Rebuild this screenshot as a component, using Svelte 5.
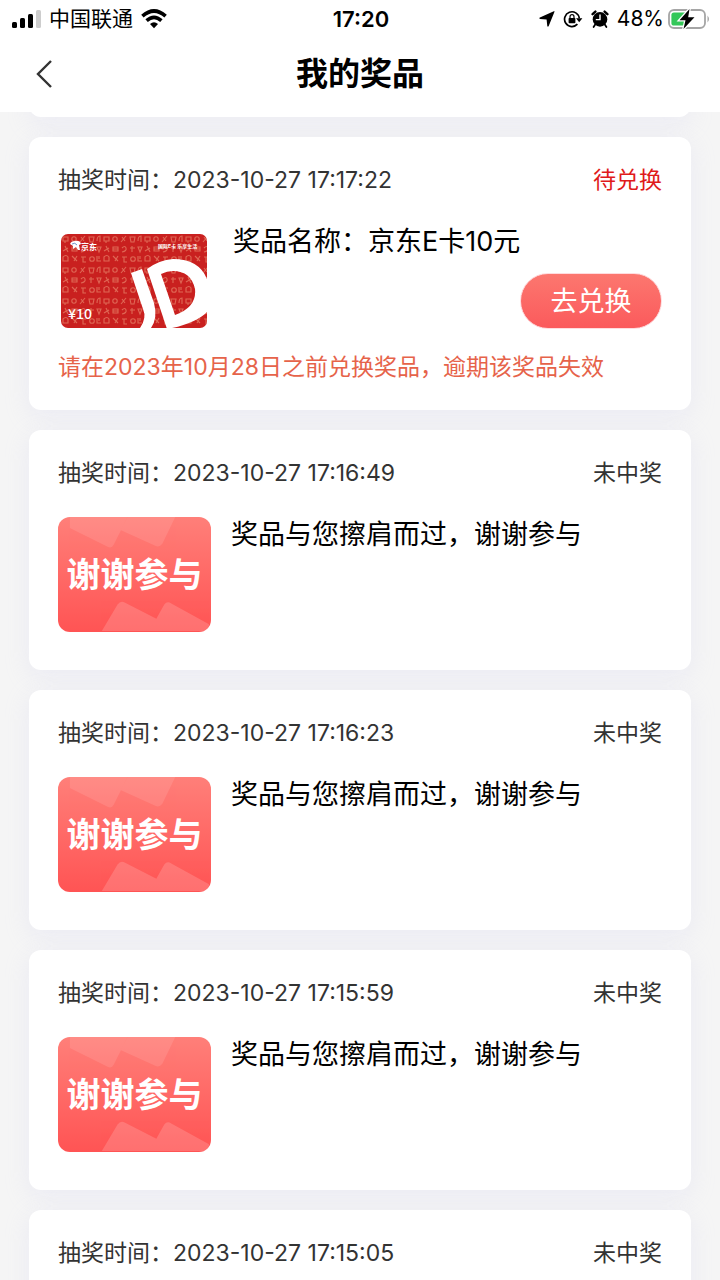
<script>
  const records = [
    { time: '2023-10-27 17:17:22', status: '待兑换', won: true, name: '奖品名称：京东E卡10元' },
    { time: '2023-10-27 17:16:49', status: '未中奖', won: false, name: '奖品与您擦肩而过，谢谢参与' },
    { time: '2023-10-27 17:16:23', status: '未中奖', won: false, name: '奖品与您擦肩而过，谢谢参与' },
    { time: '2023-10-27 17:15:59', status: '未中奖', won: false, name: '奖品与您擦肩而过，谢谢参与' },
    { time: '2023-10-27 17:15:05', status: '未中奖', won: false, name: '' }
  ];
</script>

<div class="page">
  <header>
    <div class="status">
      <div class="side">
        <svg width="32" height="20" viewBox="0 0 32 20" aria-hidden="true">
          <rect x="1" y="13" width="5" height="6" rx="1.5" />
          <rect x="9" y="9" width="5" height="10" rx="1.5" />
          <rect x="17" y="5" width="5" height="14" rx="1.5" />
          <rect x="25" y="1" width="5" height="18" rx="1.5" fill="#cdcdcd" />
        </svg>
        <span class="carrier">中国联通</span>
        <svg class="wifi" width="26" height="20" viewBox="0 0 26 20" aria-hidden="true">
          <g fill="none" stroke="#000" stroke-width="3.6">
            <path d="M1.4 7.2 Q13 -3.2 24.6 7.2" />
            <path d="M5.6 11.7 Q13 5.1 20.4 11.7" />
          </g>
          <path d="M9 15.1 Q13 11.5 17 15.1 L13 19.2 Z" />
        </svg>
      </div>
      <span class="clock">17:20</span>
      <div class="side right">
        <svg width="16" height="16" viewBox="0 0 16 16" aria-hidden="true">
          <path d="M15.6 .5 9.6 15.2 Q8.8 16.2 8.3 15 L7.6 8.4 1 7.9 Q-.3 7.4 .9 6.6 L14.8 .3 Q15.7 -.1 15.6 .5 Z" />
        </svg>
        <svg width="20" height="18" viewBox="0 0 20 18" aria-hidden="true">
          <path d="M14.4 14.2 A7.4 7.4 0 1 1 16.3 8.3" fill="none" stroke="#000" stroke-width="1.7" />
          <path d="M13 8.2 H19.4 L16.2 12.2 Z" />
          <rect x="5.6" y="8" width="6.8" height="5.2" rx=".8" />
          <path d="M7 8.4 V6.7 a2 2 0 0 1 4 0 V8.4" fill="none" stroke="#000" stroke-width="1.2" />
        </svg>
        <svg width="18" height="18" viewBox="0 0 18 18" aria-hidden="true">
          <circle cx="9" cy="9.4" r="7.3" />
          <path d="M1.6 4.2 4.4 1.6 M16.4 4.2 13.6 1.6" stroke="#000" stroke-width="2.4" stroke-linecap="round" />
          <path d="M4.2 14.6 2.6 17 M13.8 14.6 15.4 17" stroke="#000" stroke-width="1.8" stroke-linecap="round" />
          <path d="M9 4.6 V9.6 H4.8" fill="none" stroke="#fff" stroke-width="1.4" />
        </svg>
        <span class="percent">48%</span>
        <svg class="battery" width="43" height="20" viewBox="0 0 43 20" aria-hidden="true">
          <rect x="1" y="1" width="36" height="18" rx="5" fill="#fff" stroke="#a5a5a5" stroke-width="1.8" />
          <path d="M39.5 6.5 Q42.5 10 39.5 13.5 Z" fill="#a5a5a5" />
          <path d="M6 3.4 H19 V16.6 H6 Q3.4 16.6 3.4 14 V6 Q3.4 3.4 6 3.4 Z" fill="#34c759" />
          <path d="M21.5 0 11.5 11.2 H17.5 L15.5 20 26.5 8.3 H20.2 Z" stroke="#fff" stroke-width="2.6" paint-order="stroke" />
        </svg>
      </div>
    </div>
    <div class="nav">
      <button class="back" type="button" aria-label="返回">
        <svg width="16" height="28" viewBox="0 0 16 28" aria-hidden="true">
          <path d="M15 1 2 14 15 27" fill="none" stroke="#333" stroke-width="2.4" />
        </svg>
      </button>
      <h1>我的奖品</h1>
    </div>
  </header>

  <main>
    <div class="tail"></div>
    {#each records as r}
      <article class="card">
        <div class="top">
          <span>抽奖时间：{r.time}</span>
          <span class:pending={r.won}>{r.status}</span>
        </div>
        {#if r.name}
          <div class="body" class:won={r.won}>
            {#if r.won}
              <svg class="gift" viewBox="0 0 146 94" role="img" aria-label="京东E卡">
                <defs>
                  <clipPath id="giftclip"><rect width="146" height="94" rx="7" /></clipPath>
                  <pattern id="doodles" width="41" height="31" patternUnits="userSpaceOnUse">
                    <g fill="none" stroke="#e8846a" stroke-width="1.1" opacity=".7">
                      <path d="M2 3 H7 V7 H2 Z M4 7 V9" />
                      <circle cx="13" cy="5" r="2.2" />
                      <path d="M19 8 24 2 M20 3 l3 4" />
                      <path d="M28 3 h5 l-1 5 h-3 Z" />
                      <path d="M36 7 q0 -5 3 -5 v6" />
                      <path d="M4 12 l3 6 M2 17 l5 -3" />
                      <path d="M11 13 h5 v4 h-5 Z M11 15 h5" />
                      <path d="M20 14 q3 -3 4 0 t-4 4" />
                      <path d="M30 12 v6 M28 14 h5" />
                      <path d="M36 13 h4 l-2 5 Z" />
                      <path d="M2 23 q3 -3 5 0 v4 H2 Z" />
                      <path d="M11 22 l5 5 M16 22 l-3 5" />
                      <path d="M20 23 h5 M22 23 v5 h3" />
                      <circle cx="31" cy="25" r="2.3" />
                      <path d="M36 22 v5 h4 M38 22 v3" />
                    </g>
                  </pattern>
                </defs>
                <g clip-path="url(#giftclip)">
                  <rect width="146" height="94" fill="#c9201f" />
                  <rect width="146" height="94" fill="url(#doodles)" />
                  <path d="M70 39 81 35 93 69 Q97 84 90 94 H79 Q86 84 82 75 Z" />
                  <path fill-rule="evenodd" d="M86 35 Q98 26 112 25 Q138 25 146 45 V78 Q134 90 106 95 Z M100 40 114 81 Q136 73 134 55 Q130 37 112 37 Q106 37 100 40 Z" />
                </g>
                <path d="M9 10 q1 -3 5 -3 q5 -1 6 3 l-2 1 1 5 h-2 l-2 -3 -3 2 v-3 Z" />
                <path d="M11 10 q3 -2 5 1" fill="none" stroke="#6f91c7" stroke-width="1" />
                <text x="20" y="16" font-size="8" font-weight="700">京东</text>
                <text x="97" y="14" font-size="5" font-weight="700">国际E卡 乐享生活</text>
                <text class="price" x="7" y="85" font-size="14">¥10</text>
              </svg>
            {:else}
              <div class="thanks">
                <svg viewBox="0 0 154 115" aria-hidden="true">
                  <g fill="#fff" opacity=".1">
                    <path d="M12 0 H70 L56 28 Q54 32 50 30 L12 11 Z" />
                    <path d="M70 0 H118 L105 27 Q102 31 98 29 L63 13 Z" />
                  </g>
                  <g fill="#fff" opacity=".16">
                    <path d="M44 115 60 88 Q63 84 67 86 L102 104 97 115 Z" />
                    <path d="M92 115 107 88 Q110 84 114 87 L152 108 V115 Z" />
                  </g>
                </svg>
                <span>谢谢参与</span>
              </div>
            {/if}
            <div class="info">
              <p class="name">{r.name}</p>
              {#if r.won}<button class="redeem" type="button">去兑换</button>{/if}
            </div>
          </div>
        {/if}
        {#if r.won}<p class="notice">请在2023年10月28日之前兑换奖品，逾期该奖品失效</p>{/if}
      </article>
    {/each}
  </main>
</div>

<style>
  :global(body) {
    background: #f5f5f5;
    overflow: hidden;
  }
  .page {
    height: 100vh;
    display: flex;
    flex-direction: column;
    font-family: Inter, "Noto Sans CJK SC", sans-serif;
    color: #000;
  }
  header {
    flex: none;
    padding-bottom: 2px;
    background: #fff;
  }
  .status {
    height: 38px;
    display: grid;
    grid-template-columns: 1fr auto 1fr;
    align-items: center;
    padding: 0 9px 0 11px;
    font-size: 21px;
    line-height: 38px;
  }
  .side {
    display: flex;
    align-items: center;
  }
  .side svg {
    flex: none;
  }
  .carrier {
    margin-left: 6px;
  }
  .wifi {
    margin-left: 8px;
  }
  .right {
    justify-content: flex-end;
    gap: 8px;
  }
  .battery {
    margin-left: -4px;
  }
  .clock {
    font-size: 22px;
    font-weight: 600;
  }
  .nav {
    height: 72px;
    display: grid;
    grid-template-columns: 72px 1fr 72px;
    align-items: center;
  }
  .back {
    height: 48px;
    padding: 0 0 0 36px;
    border: 0;
    background: none;
    display: flex;
    align-items: center;
  }
  h1 {
    margin: 0;
    text-align: center;
    font-size: 32px;
    line-height: 40px;
    font-weight: 600;
  }
  main {
    flex: 1;
    min-height: 0;
    overflow-y: auto;
    scrollbar-width: none;
    padding: 0 29px;
    display: flex;
    flex-direction: column;
    gap: 20px;
  }
  .tail,
  .card {
    flex: none;
    background: #fff;
    border-radius: 12px;
    box-shadow: 0 6px 24px rgba(200, 200, 240, 0.22);
  }
  .tail {
    height: 24px;
    margin-top: -19px;
  }
  .card {
    box-sizing: border-box;
    min-height: 240px;
    padding: 27px 29px;
  }
  .top {
    display: flex;
    justify-content: space-between;
    font-size: 23px;
    line-height: 32px;
    color: #333;
  }
  .top .pending {
    color: #e01b1b;
  }
  .body {
    display: flex;
    align-items: flex-start;
    gap: 20px;
    margin-top: 28px;
  }
  .won {
    padding-left: 3px;
    gap: 26px;
  }
  .gift {
    flex: none;
    width: 146px;
    height: 94px;
    margin-top: 10px;
    fill: #fff;
  }
  .price {
    font-family: "Noto Sans CJK SC", sans-serif;
    font-weight: 500;
  }
  .thanks {
    flex: none;
    position: relative;
    width: 153px;
    height: 115px;
    border-radius: 12px;
    overflow: hidden;
    background: linear-gradient(#ff7f79, #ff5454);
    color: #fff;
    font-size: 34px;
    font-weight: 700;
    line-height: 115px;
    text-align: center;
  }
  .thanks svg {
    position: absolute;
    inset: 0;
  }
  .thanks span {
    position: relative;
  }
  .info {
    flex: 1;
    display: flex;
    flex-direction: column;
  }
  p {
    margin: 0;
  }
  .name {
    font-size: 27px;
    line-height: 36px;
  }
  .redeem {
    align-self: flex-end;
    width: 142px;
    height: 56px;
    margin-top: 13px;
    padding: 0 0 4px;
    border: 1px solid #ffdcdf;
    border-radius: 28px;
    background: linear-gradient(#fc776f, #fb5a5c);
    color: #fff;
    font: inherit;
    font-size: 27px;
  }
  .notice {
    margin-top: 22px;
    font-size: 23px;
    line-height: 32px;
    color: #e6634a;
  }
</style>
